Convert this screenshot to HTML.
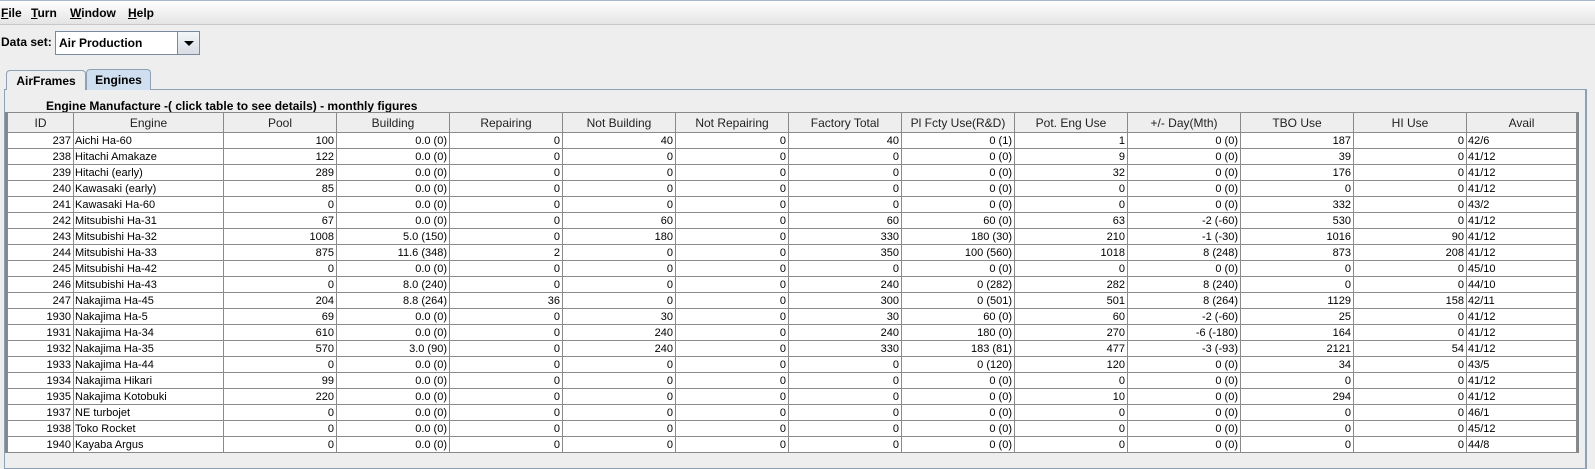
<!DOCTYPE html>
<html><head><meta charset="utf-8"><style>
*{margin:0;padding:0;box-sizing:border-box}
body{width:1595px;height:459px;background:#eeeeee;font-family:"Liberation Sans",Tahoma,sans-serif;position:relative;overflow:hidden;color:#000}
.menu{position:absolute;left:0;top:0;width:1595px;height:25px;border-top:1px solid #a8b8cc;background:linear-gradient(#ffffff,#e4e4e4);border-bottom:1px solid #c8c8c8;font-size:12px;font-weight:bold}
.menu span{position:absolute;top:5px}
.menu u{text-decoration:underline}
.ds{position:absolute;left:1px;top:35px;font-size:12px;font-weight:bold}
.combo{position:absolute;left:55px;top:31px;width:145px;height:24px;border:1px solid #7a8a9e;background:#fff;font-size:12px;font-weight:bold;padding:4px 0 0 3px}
.combo .btn{position:absolute;right:0;top:0;width:22px;height:22px;border-left:1px solid #7a8a9e;background:linear-gradient(#f4f6f8,#d8dde4)}
.combo .btn:after{content:"";position:absolute;left:6px;top:9px;border-left:5px solid transparent;border-right:5px solid transparent;border-top:5px solid #000}
.tab{position:absolute;top:70px;height:20px;font-size:12px;font-weight:bold;border:1px solid #8ea0b4;border-bottom:none;border-radius:4px 4px 0 0;padding:3px 0 0 0;text-align:center}
.panel{position:absolute;left:4px;top:89px;width:1583px;height:380px;border:1px solid #8ea0b4;border-right:2px solid #8ea0b4;background:#eeeeee}
.title{position:absolute;left:46px;top:99px;font-size:12px;font-weight:bold}
.tbl{position:absolute;left:5px;top:112px;border-left:2px solid #808890;border-right:2px solid #808890}
table{border-collapse:collapse;table-layout:fixed;font-size:11px}
td,th{border:1px solid #8a8a8a;height:16px;padding:0 2px;white-space:nowrap;overflow:hidden}
th{height:20px;font-weight:normal;font-size:12px;background:#eeeeee;color:#222}
td{background:#fff;text-align:right;line-height:14px}
td:nth-child(2),td:nth-child(14){text-align:left;padding-left:1px}
</style></head><body>
<div class="menu"><span style="left:1px"><u>F</u>ile</span><span style="left:31px"><u>T</u>urn</span><span style="left:70px"><u>W</u>indow</span><span style="left:128px"><u>H</u>elp</span></div>
<div class="ds">Data set:</div>
<div class="combo">Air Production<div class="btn"></div></div>
<div class="panel"></div>
<div class="tab" style="left:6px;width:80px;background:#eeeeee">AirFrames</div>
<div class="tab" style="left:86px;width:65px;background:#cfdff0;top:69px;height:21px">Engines</div>
<div class="title">Engine Manufacture -( click table to see details) - monthly figures</div>
<div class="tbl"><table>
<colgroup><col style="width:66px"><col style="width:150px"><col style="width:113px"><col style="width:113px"><col style="width:113px"><col style="width:113px"><col style="width:113px"><col style="width:113px"><col style="width:113px"><col style="width:113px"><col style="width:113px"><col style="width:113px"><col style="width:113px"><col style="width:110px"></colgroup>
<tr><th>ID</th><th>Engine</th><th>Pool</th><th>Building</th><th>Repairing</th><th>Not Building</th><th>Not Repairing</th><th>Factory Total</th><th>Pl Fcty Use(R&amp;D)</th><th>Pot. Eng Use</th><th>+/- Day(Mth)</th><th>TBO Use</th><th>HI Use</th><th>Avail</th></tr>
<tr><td>237</td><td>Aichi Ha-60</td><td>100</td><td>0.0 (0)</td><td>0</td><td>40</td><td>0</td><td>40</td><td>0 (1)</td><td>1</td><td>0 (0)</td><td>187</td><td>0</td><td>42/6</td></tr>
<tr><td>238</td><td>Hitachi Amakaze</td><td>122</td><td>0.0 (0)</td><td>0</td><td>0</td><td>0</td><td>0</td><td>0 (0)</td><td>9</td><td>0 (0)</td><td>39</td><td>0</td><td>41/12</td></tr>
<tr><td>239</td><td>Hitachi (early)</td><td>289</td><td>0.0 (0)</td><td>0</td><td>0</td><td>0</td><td>0</td><td>0 (0)</td><td>32</td><td>0 (0)</td><td>176</td><td>0</td><td>41/12</td></tr>
<tr><td>240</td><td>Kawasaki (early)</td><td>85</td><td>0.0 (0)</td><td>0</td><td>0</td><td>0</td><td>0</td><td>0 (0)</td><td>0</td><td>0 (0)</td><td>0</td><td>0</td><td>41/12</td></tr>
<tr><td>241</td><td>Kawasaki Ha-60</td><td>0</td><td>0.0 (0)</td><td>0</td><td>0</td><td>0</td><td>0</td><td>0 (0)</td><td>0</td><td>0 (0)</td><td>332</td><td>0</td><td>43/2</td></tr>
<tr><td>242</td><td>Mitsubishi Ha-31</td><td>67</td><td>0.0 (0)</td><td>0</td><td>60</td><td>0</td><td>60</td><td>60 (0)</td><td>63</td><td>-2 (-60)</td><td>530</td><td>0</td><td>41/12</td></tr>
<tr><td>243</td><td>Mitsubishi Ha-32</td><td>1008</td><td>5.0 (150)</td><td>0</td><td>180</td><td>0</td><td>330</td><td>180 (30)</td><td>210</td><td>-1 (-30)</td><td>1016</td><td>90</td><td>41/12</td></tr>
<tr><td>244</td><td>Mitsubishi Ha-33</td><td>875</td><td>11.6 (348)</td><td>2</td><td>0</td><td>0</td><td>350</td><td>100 (560)</td><td>1018</td><td>8 (248)</td><td>873</td><td>208</td><td>41/12</td></tr>
<tr><td>245</td><td>Mitsubishi Ha-42</td><td>0</td><td>0.0 (0)</td><td>0</td><td>0</td><td>0</td><td>0</td><td>0 (0)</td><td>0</td><td>0 (0)</td><td>0</td><td>0</td><td>45/10</td></tr>
<tr><td>246</td><td>Mitsubishi Ha-43</td><td>0</td><td>8.0 (240)</td><td>0</td><td>0</td><td>0</td><td>240</td><td>0 (282)</td><td>282</td><td>8 (240)</td><td>0</td><td>0</td><td>44/10</td></tr>
<tr><td>247</td><td>Nakajima Ha-45</td><td>204</td><td>8.8 (264)</td><td>36</td><td>0</td><td>0</td><td>300</td><td>0 (501)</td><td>501</td><td>8 (264)</td><td>1129</td><td>158</td><td>42/11</td></tr>
<tr><td>1930</td><td>Nakajima Ha-5</td><td>69</td><td>0.0 (0)</td><td>0</td><td>30</td><td>0</td><td>30</td><td>60 (0)</td><td>60</td><td>-2 (-60)</td><td>25</td><td>0</td><td>41/12</td></tr>
<tr><td>1931</td><td>Nakajima Ha-34</td><td>610</td><td>0.0 (0)</td><td>0</td><td>240</td><td>0</td><td>240</td><td>180 (0)</td><td>270</td><td>-6 (-180)</td><td>164</td><td>0</td><td>41/12</td></tr>
<tr><td>1932</td><td>Nakajima Ha-35</td><td>570</td><td>3.0 (90)</td><td>0</td><td>240</td><td>0</td><td>330</td><td>183 (81)</td><td>477</td><td>-3 (-93)</td><td>2121</td><td>54</td><td>41/12</td></tr>
<tr><td>1933</td><td>Nakajima Ha-44</td><td>0</td><td>0.0 (0)</td><td>0</td><td>0</td><td>0</td><td>0</td><td>0 (120)</td><td>120</td><td>0 (0)</td><td>34</td><td>0</td><td>43/5</td></tr>
<tr><td>1934</td><td>Nakajima Hikari</td><td>99</td><td>0.0 (0)</td><td>0</td><td>0</td><td>0</td><td>0</td><td>0 (0)</td><td>0</td><td>0 (0)</td><td>0</td><td>0</td><td>41/12</td></tr>
<tr><td>1935</td><td>Nakajima Kotobuki</td><td>220</td><td>0.0 (0)</td><td>0</td><td>0</td><td>0</td><td>0</td><td>0 (0)</td><td>10</td><td>0 (0)</td><td>294</td><td>0</td><td>41/12</td></tr>
<tr><td>1937</td><td>NE turbojet</td><td>0</td><td>0.0 (0)</td><td>0</td><td>0</td><td>0</td><td>0</td><td>0 (0)</td><td>0</td><td>0 (0)</td><td>0</td><td>0</td><td>46/1</td></tr>
<tr><td>1938</td><td>Toko Rocket</td><td>0</td><td>0.0 (0)</td><td>0</td><td>0</td><td>0</td><td>0</td><td>0 (0)</td><td>0</td><td>0 (0)</td><td>0</td><td>0</td><td>45/12</td></tr>
<tr><td>1940</td><td>Kayaba Argus</td><td>0</td><td>0.0 (0)</td><td>0</td><td>0</td><td>0</td><td>0</td><td>0 (0)</td><td>0</td><td>0 (0)</td><td>0</td><td>0</td><td>44/8</td></tr>
</table></div>
</body></html>
